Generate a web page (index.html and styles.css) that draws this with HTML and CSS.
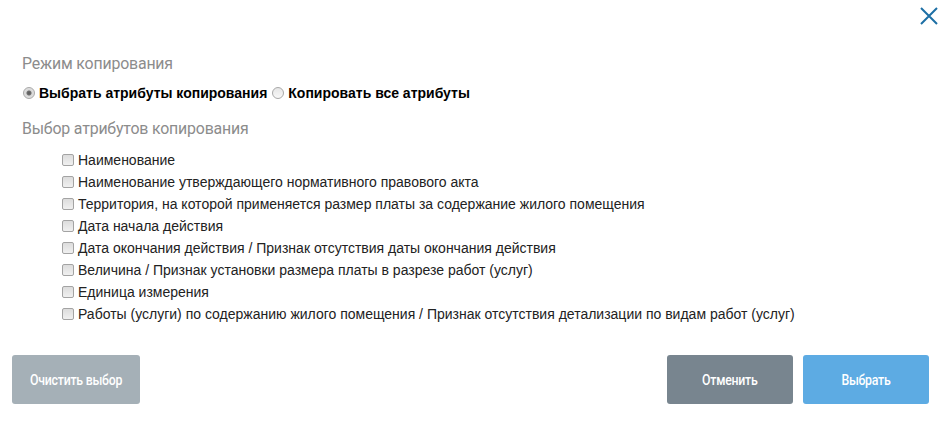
FILE: index.html
```html
<!DOCTYPE html>
<html lang="ru">
<head>
<meta charset="utf-8">
<link rel="stylesheet" href="styles.css">
</head>
<body>
<div class="dialog">
  <div class="topbar">
    <button class="close" aria-label="Закрыть">
      <svg width="20" height="20" viewBox="0 0 20 20"><path d="M2 2 L18 18 M18 2 L2 18" stroke="#1d6fa5" stroke-width="2" fill="none"/></svg>
    </button>
  </div>
  <div class="content">
    <h3 class="section-title">Режим копирования</h3>
    <div class="radios">
      <label class="radio"><input type="radio" name="mode" checked> Выбрать атрибуты копирования</label>
      <label class="radio"><input type="radio" name="mode"> Копировать все атрибуты</label>
    </div>
    <h3 class="section-title second">Выбор атрибутов копирования</h3>
    <ul class="checks">
      <li><label><input type="checkbox"> Наименование</label></li>
      <li><label><input type="checkbox"> Наименование утверждающего нормативного правового акта</label></li>
      <li><label><input type="checkbox"> Территория, на которой применяется размер платы за содержание жилого помещения</label></li>
      <li><label><input type="checkbox"> Дата начала действия</label></li>
      <li><label><input type="checkbox"> Дата окончания действия / Признак отсутствия даты окончания действия</label></li>
      <li><label><input type="checkbox"> Величина / Признак установки размера платы в разрезе работ (услуг)</label></li>
      <li><label><input type="checkbox"> Единица измерения</label></li>
      <li><label><input type="checkbox"> Работы (услуги) по содержанию жилого помещения / Признак отсутствия детализации по видам работ (услуг)</label></li>
    </ul>
  </div>
  <div class="footer">
    <button class="btn btn-clear"><span>Очистить выбор</span></button>
    <div class="spacer"></div>
    <button class="btn btn-cancel"><span>Отменить</span></button>
    <button class="btn btn-ok"><span>Выбрать</span></button>
  </div>
</div>
</body>
</html>
```
FILE: styles.css
```css
html, body { margin: 0; padding: 0; background: #fff; }
body { font-family: "Liberation Sans", Arial, sans-serif; font-size: 14px; color: #222; }
.dialog { width: 941px; height: 425px; box-sizing: border-box; padding: 0 12px 0 12px; }
.topbar { display: flex; justify-content: flex-end; height: 44px; }
.close { background: none; border: 0; padding: 0; margin: 6px -10px 0 0; width: 20px; height: 20px; cursor: pointer; }
.close svg { display: block; }
.content { padding-left: 10px; }
.section-title { margin: 8px 0 0 0; font-family: "Roboto", sans-serif; font-weight: 400; font-size: 17px; color: #8c8c8c; line-height: 22px; letter-spacing: -0.2px; display: inline-block; transform: scaleX(0.935); transform-origin: left center; }
.section-title.second { margin-top: 14px; }
.radios { display: flex; margin-top: 9px; height: 20px; align-items: center; }
.radio { font-weight: bold; display: inline-flex; align-items: center; margin-right: 4px; color: #000; }
.radio input { appearance: none; -webkit-appearance: none; margin: 0 4px 0 1px; width: 12px; height: 12px; border-radius: 50%; border: 1px solid #a8a8a8; box-sizing: border-box; background: linear-gradient(#e6e6e6, #f8f8f8); position: relative; }
.radio input:checked { background: radial-gradient(circle, #5a5a5a 0, #6e6e6e 2px, #d8d8d8 3px, #e8e8e8 100%); }
.checks { list-style: none; margin: 10px 0 0 0; padding: 0 0 0 40px; }
.checks li { height: 22px; display: flex; align-items: center; }
.checks label { display: inline-flex; align-items: center; }
.checks input { appearance: none; -webkit-appearance: none; margin: 0 4px 0 0; width: 12px; height: 12px; border: 1px solid #a3a3a3; border-radius: 2px; box-sizing: border-box; background: linear-gradient(#dcdcdc, #f0f0f0); }
.footer { display: flex; margin-top: 30px; gap: 10px; }
.spacer { flex: 1; }
.btn { width: 128px; height: 49px; border: 0; border-radius: 3px; color: #fff; font-family: "Roboto", sans-serif; font-size: 15px; font-weight: 500; letter-spacing: -0.3px; cursor: pointer; padding: 0; }
.btn span { display: inline-block; transform: scaleX(0.82); }
.btn-clear { background: #a5b0b7; }
.btn-cancel { background: #78858f; width: 126px; }
.btn-ok { background: #5dabe3; width: 126px; }
```
